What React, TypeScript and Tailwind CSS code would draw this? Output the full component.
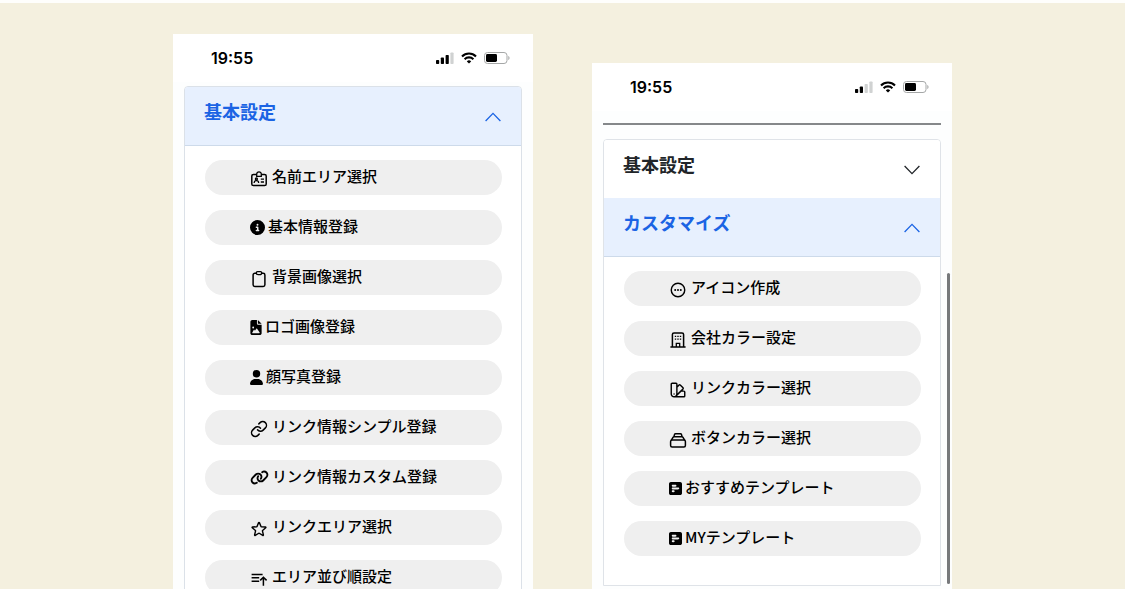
import type { ReactNode } from "react";
import {
  FaCircleInfo,
  FaFileImage,
  FaLink,
  FaSquarePollHorizontal,
  FaUser,
} from "react-icons/fa6";
import {
  HiOutlineEllipsisHorizontalCircle,
  HiOutlineStar,
  HiOutlineSwatch,
} from "react-icons/hi2";
import { Link } from "lucide-react";

type MenuItem = {
  label: string;
  icon: ReactNode;
};

const solid = "h-[15px] shrink-0";
const outline = "mt-[2px] mr-px size-[18px] shrink-0";

function BadgeIcon() {
  return (
    <svg viewBox="0 0 18 18" fill="none" stroke="currentColor" strokeWidth="1.5" className={outline}>
      <path d="M6.6 4.4H3.4A1.6 1.6 0 0 0 1.8 6v8a1.6 1.6 0 0 0 1.6 1.6h11.2a1.6 1.6 0 0 0 1.6-1.6V6a1.6 1.6 0 0 0-1.6-1.6h-3.2" />
      <path d="M6.7 6.3V4.1a2.3 2.3 0 0 1 4.6 0v2.2z" strokeWidth="1.3" />
      <circle cx="6.4" cy="9" r="1" strokeWidth="1.3" />
      <path d="M4.2 13v-.5c0-1.2.9-1.9 2.2-1.9s2.2.7 2.2 1.900v.5M10.8 9.200h3.2M10.800 12h3.2" strokeWidth="1.3" />
    </svg>
  );
}

function ClipboardIcon() {
  return (
    <svg viewBox="0 0 18 18" fill="none" stroke="currentColor" strokeWidth="1.5" strokeLinejoin="round" className={outline}>
      <path d="M6.2 3.2H4.8a1.700 1.700 0 0 0-1.700 1.700v9.800a1.700 1.700 0 0 0 1.700 1.700h8.400a1.700 1.700 0 0 0 1.700-1.700V4.900a1.700 1.700 0 0 0-1.700-1.700h-1.400" />
      <path d="M6.3 2.9A1.2 1.2 0 0 1 7.5 1.7h3a1.2 1.2 0 0 1 1.2 1.2c0 1-.8 1.8-1.8 1.8H8.1c-1 0-1.800-.8-1.800-1.800z" strokeWidth="1.3" />
    </svg>
  );
}

function SortUpIcon() {
  return (
    <svg viewBox="0 0 18 18" fill="none" stroke="currentColor" strokeWidth="1.5" className={outline}>
      <path d="M1.6 4.4h11M1.6 7.8h7.6M1.6 11.2h7.6M13.4 15.8V7.2M10.2 10.400l3.200-3.200 3.200 3.200" />
    </svg>
  );
}

function BuildingIcon() {
  return (
    <svg viewBox="0 0 18 18" fill="none" stroke="currentColor" strokeWidth="1.5" className={outline}>
      <path d="M1.4 16h15.200M3.400 16V3.600A1.600 1.600 0 0 1 5 2h8a1.600 1.600 0 0 1 1.600 1.600V16" />
      <path d="M7.300 16v-3.600h3.400V16" strokeWidth="1.3" />
      <path d="M5.800 5.400h1.400M8.300 5.400h1.400M10.800 5.400h1.400M5.800 8.200h1.400M8.300 8.200h1.400M10.800 8.200h1.400" strokeWidth="1.3" />
    </svg>
  );
}

function StackIcon() {
  return (
    <svg viewBox="0 0 18 18" fill="none" stroke="currentColor" strokeWidth="1.5" strokeLinejoin="round" className={outline}>
      <rect x="1.600" y="9" width="14.800" height="7" rx="1.500" />
      <path d="M2.400 9.200 4 6.400A1.400 1.400 0 0 1 5.200 5.700h7.600a1.400 1.400 0 0 1 1.200.7l1.600 2.800" />
      <path d="M4.900 5.600 5.500 3.600A1.200 1.200 0 0 1 6.600 2.800h4.800a1.200 1.200 0 0 1 1.100.8l.6 2" />
    </svg>
  );
}

const basicItems: MenuItem[] = [
  { label: "名前エリア選択", icon: <BadgeIcon /> },
  { label: "基本情報登録", icon: <FaCircleInfo className={`${solid} w-[15px]`} /> },
  { label: "背景画像選択", icon: <ClipboardIcon /> },
  { label: "ロゴ画像登録", icon: <FaFileImage className={`${solid} w-3`} /> },
  { label: "顔写真登録", icon: <FaUser className={`${solid} w-[13px]`} /> },
  { label: "リンク情報シンプル登録", icon: <Link className={outline} strokeWidth={2} /> },
  { label: "リンク情報カスタム登録", icon: <FaLink className={`${solid} w-[19px]`} /> },
  { label: "リンクエリア選択", icon: <HiOutlineStar className={`${outline} stroke-[1.9]`} /> },
  { label: "エリア並び順設定", icon: <SortUpIcon /> },
];

const customizeItems: MenuItem[] = [
  {
    label: "アイコン作成",
    icon: <HiOutlineEllipsisHorizontalCircle className={`${outline} stroke-[1.9]`} />,
  },
  { label: "会社カラー設定", icon: <BuildingIcon /> },
  { label: "リンクカラー選択", icon: <HiOutlineSwatch className={`${outline} stroke-[1.9]`} /> },
  { label: "ボタンカラー選択", icon: <StackIcon /> },
  { label: "おすすめテンプレート", icon: <FaSquarePollHorizontal className={`${solid} w-[13px]`} /> },
  { label: "MYテンプレート", icon: <FaSquarePollHorizontal className={`${solid} w-[13px]`} /> },
];

function StatusBar({ bars }: { bars: number }) {
  return (
    <div className="flex h-12 items-center justify-between bg-white pr-[23px] pl-[38px]">
      <span className="font-['Inter',sans-serif] text-base font-semibold text-black">19:55</span>
      <div className="flex items-center gap-[7px]">
        <svg viewBox="0 0 18 12" className="h-3 w-[18px]">
          {[0, 1, 2, 3].map((n) => (
            <rect
              key={n}
              x={n * 4.8}
              y={8 - n * 2.5}
              width="3.2"
              height={4 + n * 2.5}
              rx="0.8"
              fill={n < bars ? "#000" : "#d0d2d2"}
            />
          ))}
        </svg>
        <svg viewBox="0 0 16 12" fill="none" stroke="#000" strokeWidth="2.1" className="h-3 w-4">
          <path d="M1 4.4a10 10 0 0 1 14 0M3.6 7.2a6.3 6.3 0 0 1 8.8 0" />
          <path d="M8 11.6 5.8 9.4a3.1 3.1 0 0 1 4.4 0z" fill="#000" stroke="none" />
        </svg>
        <svg viewBox="0 0 26 12" className="h-3 w-[26px]">
          <rect x="0.5" y="0.5" width="22.5" height="11" rx="3" fill="none" stroke="#a5a7a7" />
          <rect x="2" y="2" width="11" height="8" rx="1.4" fill="#000" />
          <path d="M24.3 4v4c.8-.3 1.2-1.1 1.2-2s-.4-1.7-1.2-2z" fill="#a5a7a7" />
        </svg>
      </div>
    </div>
  );
}

function AccordionHeader({ title, open }: { title: string; open: boolean }) {
  return (
    <button
      type="button"
      aria-expanded={open}
      className={`flex h-[58px] w-full items-start justify-between pt-[10px] pr-5 pl-[19px] ${
        open ? "bg-[#e7f0fe] text-[#1b64e4]" : "bg-white text-[#212529]"
      }`}
    >
      <span className="text-lg leading-7 font-bold">{title}</span>
      <svg viewBox="0 0 16 10" fill="none" stroke="currentColor" strokeWidth="1.3" className="mt-[15px] h-[10px] w-4">
        <path d={open ? "M.6 9 8 1.4 15.4 9" : "M.6 1 8 8.6 15.4 1"} />
      </svg>
    </button>
  );
}

function MenuList({ items }: { items: MenuItem[] }) {
  return (
    <ul className="flex flex-col gap-[15px] border-t border-[#cddaea] pt-[14px] pr-[19px] pb-[29px] pl-5">
      {items.map((item) => (
        <li key={item.label}>
          <button
            type="button"
            className="flex h-[35px] w-full items-center gap-[3px] rounded-full bg-[#efefef] pl-[45px] text-[15px] leading-5 font-medium text-black"
          >
            {item.icon}
            <span className="pb-[3px]">{item.label}</span>
          </button>
        </li>
      ))}
    </ul>
  );
}

function Phone({ bars, className, children }: { bars: number; className?: string; children: ReactNode }) {
  return (
    <section className={`relative w-[360px] shrink-0 bg-[#fdfefe] ${className ?? ""}`}>
      <StatusBar bars={bars} />
      <div className="px-[11px]">{children}</div>
    </section>
  );
}

export default function App() {
  return (
    <main className="flex h-screen justify-center gap-[59px] overflow-hidden border-t-[3px] border-[#fefefc] bg-[#f4f0df] pt-[31px] font-['Noto_Sans_CJK_JP',sans-serif]">
      <Phone bars={3}>
        <div className="mt-1 overflow-hidden rounded-t border border-[#dbe1e8] bg-white">
          <AccordionHeader title="基本設定" open />
          <MenuList items={basicItems} />
        </div>
      </Phone>

      <Phone bars={2} className="mt-[29px]">
        <hr className="mt-3 border-t-2 border-[#85888a]" />
        <div className="mt-[14px] overflow-hidden rounded-t border border-[#dfe3e8] bg-white">
          <AccordionHeader title="基本設定" open={false} />
          <AccordionHeader title="カスタマイズ" open />
          <MenuList items={customizeItems} />
        </div>
        {/* scroll indicator */}
        <div className="absolute top-[210px] right-[2px] h-[311px] w-[3px] rounded-full bg-[#77797b]" />
      </Phone>
    </main>
  );
}
